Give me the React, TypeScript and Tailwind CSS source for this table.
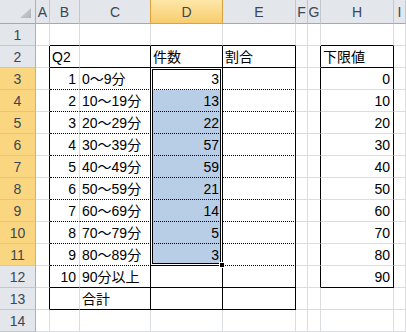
import React from "react";

// Worksheet: score bands (Q2) with counts and lower-bound table

const COLS = ["A", "B", "C", "D", "E", "F", "G", "H", "I"] as const;
type Col = (typeof COLS)[number];
const ROWS = Array.from({ length: 14 }, (_, i) => i + 1);

const BANDS = ["0～9分", "10～19分", "20～29分", "30～39分", "40～49分", "50～59分", "60～69分", "70～79分", "80～89分", "90分以上"];
const COUNTS = [3, 13, 22, 57, 59, 21, 14, 5, 3];

type CellValue = { text: string; align: "left" | "right" };

function cellValue(col: Col, row: number): CellValue | null {
  if (row === 2) {
    if (col === "B") return { text: "Q2", align: "left" };
    if (col === "D") return { text: "件数", align: "left" };
    if (col === "E") return { text: "割合", align: "left" };
    if (col === "H") return { text: "下限値", align: "left" };
  }
  if (row >= 3 && row <= 12) {
    const i = row - 3;
    if (col === "B") return { text: String(i + 1), align: "right" };
    if (col === "C") return { text: BANDS[i], align: "left" };
    if (col === "D" && i < COUNTS.length) return { text: String(COUNTS[i]), align: "right" };
    if (col === "H") return { text: String(i * 10), align: "right" };
  }
  if (row === 13 && col === "C") return { text: "合計", align: "left" };
  return null;
}

const inMain = (row: number) => row >= 2 && row <= 13;
const inLimit = (row: number) => row >= 2 && row <= 12;
const mainCols: Col[] = ["B", "C", "D", "E"];

function rightClass(col: Col, row: number) {
  const black =
    (["A", "C", "D", "E"].includes(col) && inMain(row)) ||
    (["G", "H"].includes(col) && inLimit(row));
  return black ? "border-r border-r-black" : "border-r border-r-[#dadcdd]";
}

function bottomClass(col: Col, row: number) {
  if (mainCols.includes(col)) {
    if (row === 1 || row === 2 || row === 12 || row === 13) return "border-b border-b-black";
    if (row >= 3 && row <= 11) return "[border-bottom:1px_dotted_#000]";
  }
  if (col === "H" && (row === 1 || row === 2 || row === 12)) return "border-b border-b-black";
  return "border-b border-b-[#dadcdd]";
}

function HeaderCorner() {
  return (
    <div className="relative bg-[#e3e6eb] border-r border-r-[#a9afb7] border-b border-b-[#a3a9b1]">
      <svg width="36" height="24" className="absolute left-0 top-0">
        <defs>
          <linearGradient id="corner" x1="0" y1="0" x2="1" y2="1">
            <stop offset="0" stopColor="#d2d6dc" />
            <stop offset="1" stopColor="#aeb4bc" />
          </linearGradient>
        </defs>
        <polygon points="31,8 31,18 20,18" fill="url(#corner)" />
      </svg>
    </div>
  );
}

function ColHeader({ col }: { col: Col }) {
  const active = col === "D";
  return (
    <div
      className={
        active
          ? "flex items-center justify-center bg-gradient-to-b from-[#fde7a8] to-[#f8cd6c] border-r border-r-[#e0a23e] border-b border-b-[#e0a23e] text-[#3a4656]"
          : col === "C"
          ? "flex items-center justify-center bg-[#e3e6eb] border-r border-r-[#e0a23e] border-b border-b-[#a3a9b1] text-[#3a4656]"
          : "flex items-center justify-center bg-[#e3e6eb] border-r border-r-[#c2c7ce] border-b border-b-[#a3a9b1] text-[#3a4656]"
      }
    >
      {col}
    </div>
  );
}

function RowHeader({ row }: { row: number }) {
  const active = row >= 3 && row <= 11;
  return (
    <div
      className={
        active
          ? "flex items-center justify-center bg-[#fad680] border-r border-r-[#c9b17a] border-b border-b-[#efc46e] text-[#3a4656]"
          : "flex items-center justify-center bg-[#e3e6eb] border-r border-r-[#a9afb7] border-b border-b-[#c2c7ce] text-[#3a4656]"
      }
    >
      {row}
    </div>
  );
}

function Cell({ col, row }: { col: Col; row: number }) {
  const v = cellValue(col, row);
  const selected = col === "D" && row >= 4 && row <= 11;
  return (
    <div
      className={`flex items-center overflow-hidden whitespace-nowrap pl-[2px] pr-[3px] text-black ${
        v?.align === "right" ? "justify-end" : "justify-start"
      } ${selected ? "bg-[#b8cde6]" : "bg-white"} ${rightClass(col, row)} ${bottomClass(col, row)}`}
    >
      {v?.text}
    </div>
  );
}

export default function App() {
  return (
    <div className="w-[406px] h-[332px] overflow-hidden bg-white">
      <div
        className="relative grid grid-cols-[36px_14px_30px_71px_72px_73px_12px_13px_73px_12px] grid-rows-[24px_repeat(14,22px)] text-[14px] leading-none"
        style={{ fontFamily: '"Liberation Sans", "Noto Sans CJK JP", sans-serif' }}
      >
        <HeaderCorner />
        {COLS.map((c) => (
          <ColHeader key={c} col={c} />
        ))}
        {ROWS.map((r) => (
          <React.Fragment key={r}>
            <RowHeader row={r} />
            {COLS.map((c) => (
              <Cell key={c + r} col={c} row={r} />
            ))}
          </React.Fragment>
        ))}

        {/* selection frame over D3:D11 */}
        <div className="pointer-events-none absolute left-[150px] top-[67px] w-[73px] h-[199px] border border-black shadow-[inset_0_0_0_1px_#fff,inset_0_0_0_2px_#000]" />
        {/* fill handle */}
        <div className="pointer-events-none absolute left-[219px] top-[262px] w-[6px] h-[6px] bg-black border border-white" />
      </div>
    </div>
  );
}
